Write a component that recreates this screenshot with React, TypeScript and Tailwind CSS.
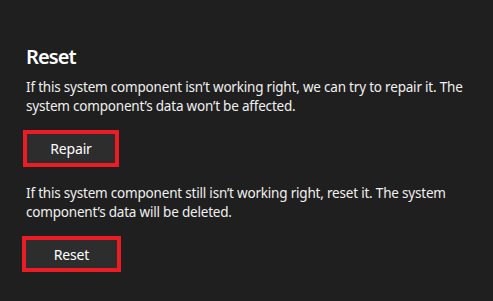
export default function App() {
  return (
    <div className="w-[493px] h-[301px] bg-[#1f1f1f] text-white pl-[26px] pt-[43px] overflow-hidden" style={{ fontFamily: '"Noto Sans", "Open Sans", sans-serif' }}>
      <h2 className="text-[20px] leading-[28px] font-semibold tracking-[-0.9px]">Reset</h2>
      <p className="mt-[7px] text-[13.5px] leading-[19px] tracking-[-0.2px] text-[#f0f0f0] whitespace-nowrap">
        If this system component isn’t working right, we can try to repair it. The
        <br />
        system component’s data won’t be affected.
      </p>
      <button className="mt-[14px] -ml-[3px] w-[96px] h-[37px] border-4 border-[#ec1c24] bg-[#2d2d2d] text-[14px] tracking-[-0.2px] text-white flex items-center justify-center">
        Repair
      </button>
      <p className="mt-[17px] text-[13.5px] leading-[19px] tracking-[-0.2px] text-[#f0f0f0] whitespace-nowrap">
        If this system component still isn’t working right, reset it. The system
        <br />
        component’s data will be deleted.
      </p>
      <button className="mt-[14px] -ml-[4px] w-[99px] h-[36px] border-4 border-[#ec1c24] bg-[#2d2d2d] text-[14px] tracking-[-0.2px] text-white flex items-center justify-center">
        Reset
      </button>
    </div>
  );
}
